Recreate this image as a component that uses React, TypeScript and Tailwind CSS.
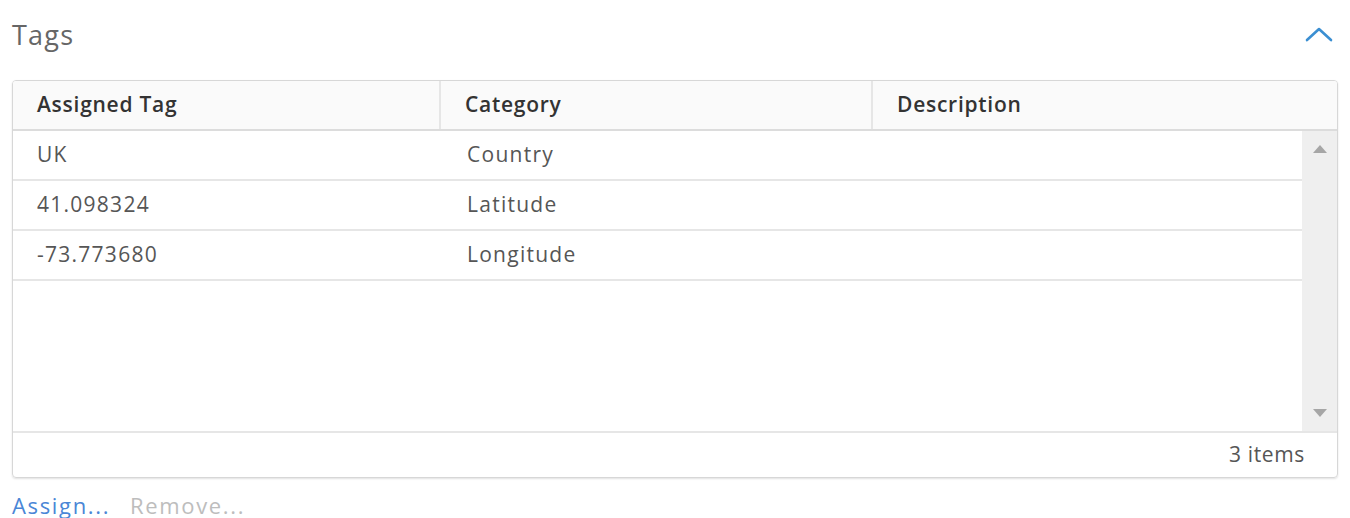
import React from "react";

const FONT = { fontFamily: "'Open Sans', 'Noto Sans', Lato, sans-serif" };

const COLS = [
  { label: "Assigned Tag", w: "w-[428px]" },
  { label: "Category", w: "w-[432px]" },
  { label: "Description", w: "flex-1" },
];

const ROWS = [
  ["UK", "Country", ""],
  ["41.098324", "Latitude", ""],
  ["-73.773680", "Longitude", ""],
];

function ChevronUp() {
  return (
    <svg width="28" height="18" viewBox="0 0 28 18" fill="none" aria-hidden>
      <path d="M2 15 L14 4 L26 15" stroke="#3b8fd2" strokeWidth="2.6" strokeLinecap="round" strokeLinejoin="round" />
    </svg>
  );
}

export default function App() {
  return (
    <div className="w-[1350px] h-[518px] overflow-hidden bg-white px-[12px]" style={FONT}>
      {/* section header */}
      <div className="flex h-[70px] items-center justify-between">
        <h2 className="text-[27px] font-normal tracking-[0.045em] text-[#666]">Tags</h2>
        <div className="mr-[5px] mt-[-2px]">
          <ChevronUp />
        </div>
      </div>

      {/* datagrid */}
      <div className="mt-[10px] flex h-[398px] flex-col overflow-hidden rounded-[4px] border border-[#d7d7d7] shadow-[0_1px_2px_rgba(0,0,0,0.12)]">
        <div className="flex h-[50px] shrink-0 border-b-2 border-[#dcdcdc] bg-[#fafafa]">
          {COLS.map((c, i) => (
            <div
              key={c.label}
              className={`${c.w} flex items-center pl-[24px] text-[21px] font-semibold tracking-[0.035em] text-[#333] ${i < 2 ? "border-r-2 border-[#e6e6e6]" : ""}`}
            >
              {c.label}
            </div>
          ))}
        </div>

        <div className="flex min-h-0 flex-1">
          <div className="flex-1">
            {ROWS.map((r) => (
              <div key={r[0]} className="flex h-[50px] border-b-2 border-[#e6e6e6] text-[21px] tracking-[0.06em] text-[#565656]">
                <div className="flex w-[428px] items-center pl-[24px]">{r[0]}</div>
                <div className="flex w-[432px] items-center pl-[26px]">{r[1]}</div>
                <div className="flex flex-1 items-center pl-[24px]">{r[2]}</div>
              </div>
            ))}
          </div>
          <div className="flex w-[35px] flex-col items-center justify-between bg-[#efefef] py-[14px]">
            <svg width="14" height="8" viewBox="0 0 14 8" aria-hidden>
              <path d="M0 8 L7 0 L14 8 Z" fill="#a6a6a6" />
            </svg>
            <svg width="14" height="8" viewBox="0 0 14 8" aria-hidden>
              <path d="M0 0 L14 0 L7 8 Z" fill="#a6a6a6" />
            </svg>
          </div>
        </div>

        <div className="flex h-[46px] shrink-0 items-center justify-end border-t-2 border-[#e6e6e6] pr-[32px] text-[21px] tracking-[0.03em] text-[#565656]">
          3 items
        </div>
      </div>

      {/* actions */}
      <div className="mt-[12px] flex gap-[20px] text-[22px] leading-[30px] tracking-[0.075em]">
        <span className="text-[#4a86d6]">Assign...</span>
        <span className="text-[#bdbdbd]">Remove...</span>
      </div>
    </div>
  );
}
